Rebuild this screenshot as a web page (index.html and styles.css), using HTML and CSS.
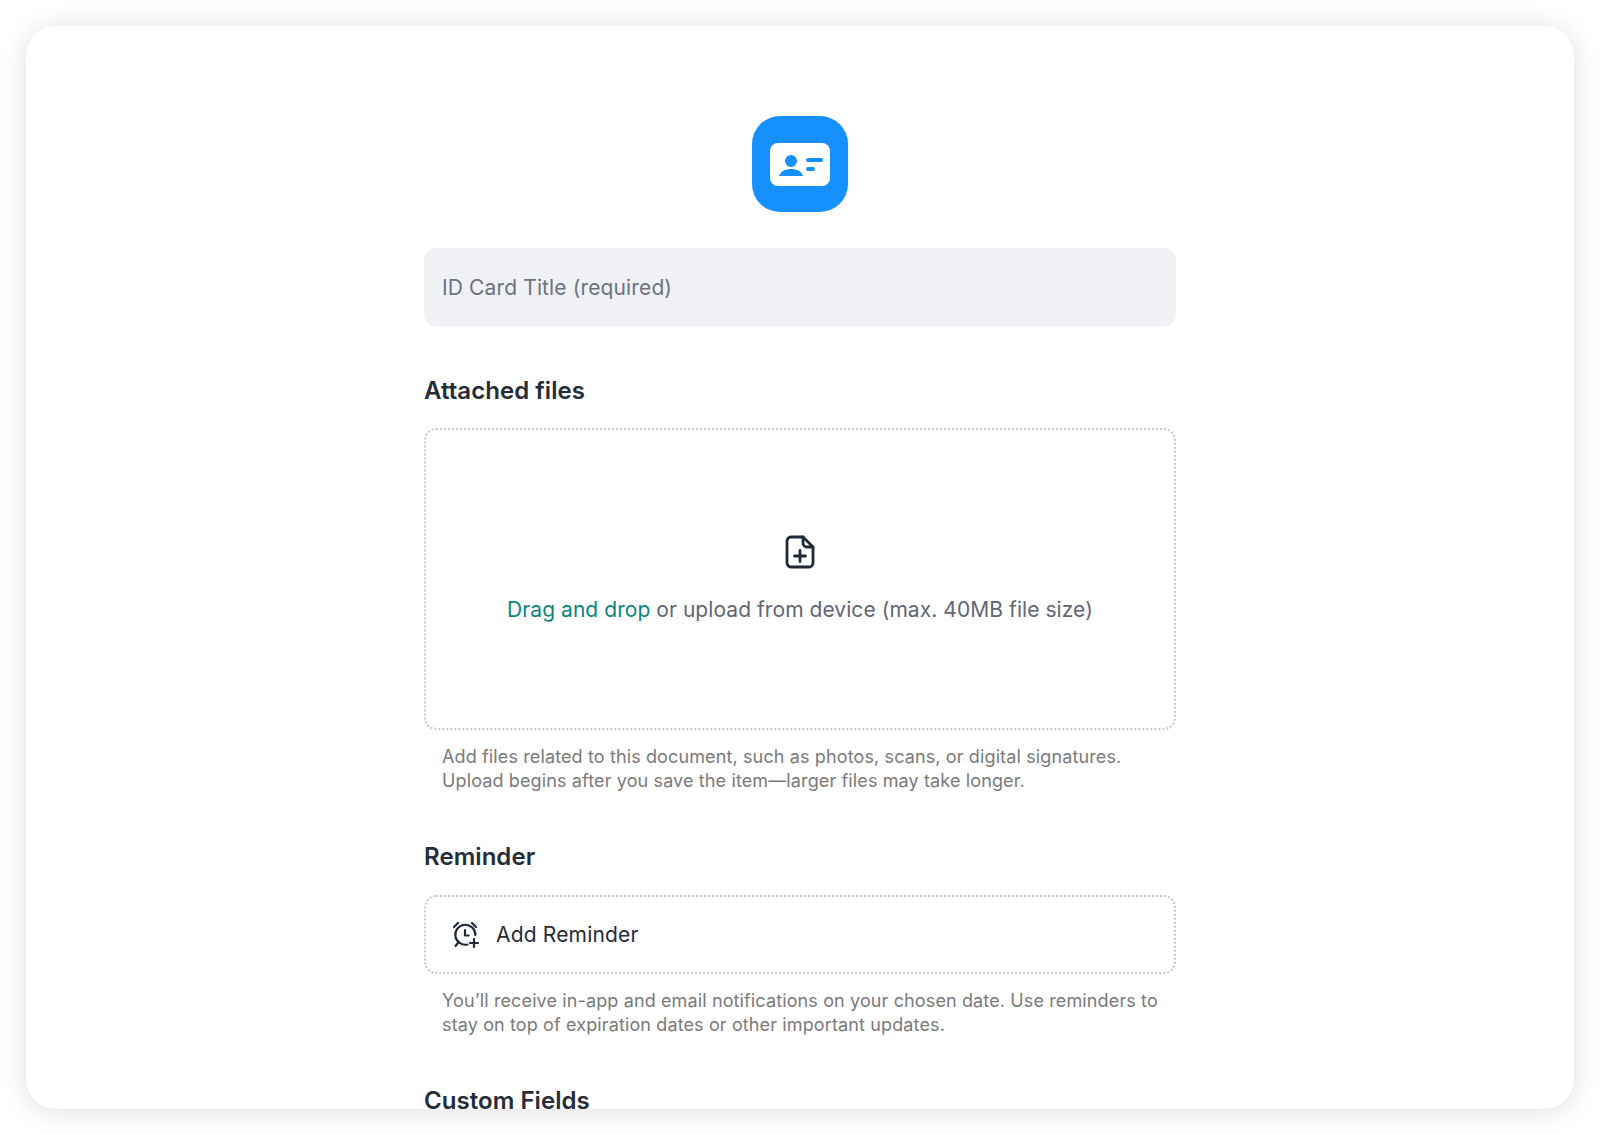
FILE: index.html
```html
<!DOCTYPE html>
<html lang="en">
<head>
    <meta charset="UTF-8">
    <title>New ID Card</title>
    <link rel="stylesheet" href="styles.css">
</head>
<body>
<main class="card">
    <div class="form">
        <div class="logo">
            <svg width="60" height="43" viewBox="0 0 60 43">
                <rect width="60" height="43" rx="8" fill="#fff"/>
                <circle cx="21" cy="18" r="6" fill="#1690ff"/>
                <path d="M9 33c1.500-4.500 6-7 12-7s10.500 2.500 12 7z" fill="#1690ff"/>
                <rect x="36" y="15" width="17" height="4" rx="2" fill="#1690ff"/>
                <rect x="36" y="24" width="9" height="4" rx="2" fill="#1690ff"/>
            </svg>
        </div>
        <div class="title-input">ID Card Title (required)</div>

        <h2 class="section-title">Attached files</h2>
        <div class="dropzone">
            <svg class="file-icon" width="30" height="34" viewBox="0 0 30 34" fill="none" stroke="#1f2937" stroke-width="2.800" stroke-linejoin="round" stroke-linecap="round">
                <path d="M6 2h12l10 10v16a4 4 0 0 1-4 4H6a4 4 0 0 1-4-4V6a4 4 0 0 1 4-4z"/>
                <path d="M18 2v6a4 4 0 0 0 4 4h6"/>
                <path d="M15 15.500v11M9.500 21h11"/>
            </svg>
            <p class="drop-text"><span class="drop-link">Drag and drop</span> or upload from device (max. 40MB file size)</p>
        </div>
        <p class="hint">Add files related to this document, such as photos, scans, or digital signatures.<br>Upload begins after you save the item—larger files may take longer.</p>

        <h2 class="section-title">Reminder</h2>
        <div class="reminder">
            <svg width="28" height="28" viewBox="0 0 28 28" fill="none" stroke="#1f2937" stroke-width="2.200" stroke-linecap="round" stroke-linejoin="round">
                <path d="M15.500 23.500A10 10 0 1 1 23.300 14"/>
                <path d="M13 9v5.500h3.500"/>
                <path d="M2 6l4-4M24 6l-4-4"/>
                <path d="M6 22l-2.500 3"/>
                <path d="M22 18v8M18 22h8"/>
            </svg>
            <span class="reminder-label">Add Reminder</span>
        </div>
        <p class="hint">You’ll receive in-app and email notifications on your chosen date. Use reminders to stay on top of expiration dates or other important updates.</p>

        <h2 class="section-title">Custom Fields</h2>
    </div>
</main>
</body>
</html>
```

FILE: styles.css
```css
html, body {
    margin: 0;
    height: 1134px;
    overflow: hidden;
    background-color: #fff;
    font-family: "Inter", "Liberation Sans", sans-serif;
}

body {
    padding: 26px;
    box-sizing: border-box;
}

.card {
    height: 1083px;
    background-color: #fff;
    border-radius: 30px;
    box-shadow: 0 2px 28px rgba(0, 0, 0, 0.13);
    overflow: hidden;
    display: flex;
    justify-content: center;
}

.form {
    width: 752px;
    padding-top: 90px;
}

.logo {
    width: 96px;
    height: 96px;
    margin: 0 auto 36px;
    background-color: #1690ff;
    border-radius: 28px;
    display: flex;
    align-items: center;
    justify-content: center;
}

.title-input {
    height: 78px;
    margin-bottom: 49px;
    padding: 0 18px;
    display: flex;
    align-items: center;
    background-color: #f0f1f5;
    border-radius: 12px;
    color: #6b7280;
    font-size: 21px;
    letter-spacing: 0.13px;
}

.section-title {
    margin: 48px 0 22px;
    color: #252c38;
    font-size: 24px;
    line-height: 32px;
    font-weight: 600;
    letter-spacing: 0.05px;
}

.dropzone {
    height: 302px;
    margin-top: -1px;
    padding-top: 1px;
    box-sizing: border-box;
    border: 2px dotted #c6c8cd;
    border-radius: 12px;
    display: flex;
    flex-direction: column;
    align-items: center;
    justify-content: center;
}

.file-icon {
    margin-bottom: 27px;
}

.drop-text {
    margin: 0;
    color: #5f6673;
    font-size: 21px;
    line-height: 28px;
    letter-spacing: 0.06px;
}

.drop-link {
    color: #0a857c;
}

.hint {
    margin: 15px 18px 0;
    color: #7a7a7a;
    font-size: 18px;
    line-height: 24px;
    letter-spacing: 0.125px;
}

.reminder {
    height: 79px;
    box-sizing: border-box;
    padding: 0 26px;
    border: 2px dotted #c6c8cd;
    border-radius: 12px;
    display: flex;
    align-items: center;
    gap: 16px;
}

.reminder-label {
    color: #252c38;
    font-size: 21px;
    letter-spacing: 0.17px;
}
```
